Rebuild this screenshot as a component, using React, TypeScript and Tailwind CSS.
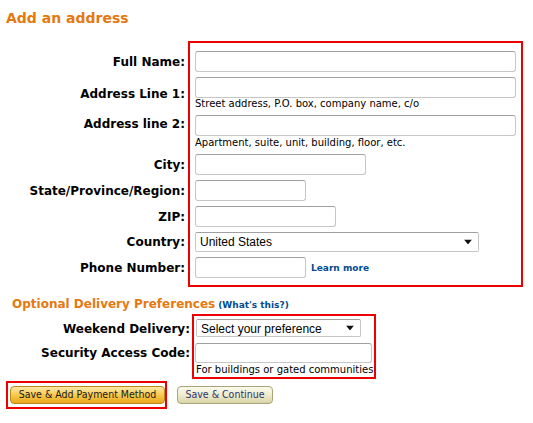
import React from 'react';

const inputCls =
  'block rounded-[3px] border border-[#c6c6c6] border-t-[#a0a0a0] bg-white px-1 text-[12px] outline-none';
const hintCls = 'block text-[10px] text-black';
const labelCls = 'text-right text-[12px] font-bold leading-[16px] text-black';

const Arrow = () => (
  <svg
    className="pointer-events-none absolute right-[7px] top-1/2 -translate-y-1/2"
    width="8"
    height="5"
    viewBox="0 0 8 5"
  >
    <path d="M0 0 H8 L4 5 Z" fill="#111" />
  </svg>
);

const Select = ({ value, width, height }: { value: string; width: string; height: string }) => (
  <div className={`relative ${width}`}>
    <select
      defaultValue={value}
      className={`${height} block w-full appearance-none rounded-[2px] border border-[#c6c6c6] border-t-[#a0a0a0] bg-white pl-[4px] text-[12px] text-black outline-none`}
      style={{ fontFamily: '"Liberation Sans", Arial, sans-serif' }}
    >
      <option>{value}</option>
    </select>
    <Arrow />
  </div>
);

type Row = { label: string; align?: string; field: React.ReactNode };

const App = () => {
  const rows: Row[] = [
    { label: 'Full Name:', field: <input className={`${inputCls} h-[21px] w-[321px]`} /> },
    {
      label: 'Address Line 1:',
      field: (
        <>
          <input className={`${inputCls} h-[21px] w-[321px]`} />
          <span className={`${hintCls} leading-[12px]`}>Street address, P.O. box, company name, c/o</span>
        </>
      ),
    },
    {
      label: 'Address line 2:',
      align: 'self-start pt-[1px]',
      field: (
        <>
          <input className={`${inputCls} h-[21px] w-[321px]`} />
          <span className={`${hintCls} leading-[13px]`}>Apartment, suite, unit, building, floor, etc.</span>
        </>
      ),
    },
    { label: 'City:', field: <input className={`${inputCls} h-[21px] w-[171px]`} /> },
    { label: 'State/Province/Region:', field: <input className={`${inputCls} h-[21px] w-[111px]`} /> },
    { label: 'ZIP:', field: <input className={`${inputCls} h-[21px] w-[141px]`} /> },
    {
      label: 'Country:',
      field: <Select value="United States" width="w-[284px]" height="h-[20px]" />,
    },
    {
      label: 'Phone Number:',
      field: (
        <div className="flex items-center">
          <input className={`${inputCls} h-[21px] w-[111px]`} />
          <a className="ml-[5px] mt-[2px] text-[9px] font-bold text-[#004b91]">Learn more</a>
        </div>
      ),
    },
  ];

  return (
    <div
      className="min-h-[423px] w-[533px] bg-white pl-[6px] pt-[8px] text-black"
      style={{ fontFamily: '"DejaVu Sans", Verdana, sans-serif' }}
    >
      <h1 className="text-[14px] font-bold leading-[20px] text-[#e47911]">Add an address</h1>

      {/* Address block: red frame spans the whole field column */}
      <div className="mt-[13px] grid grid-cols-[182px_335px] gap-y-[5px]">
        <div className="col-start-2 row-start-1 row-end-11 border-2 border-[#ee0000]" />
        <div className="col-start-1 row-start-1 h-[5px]" />
        {rows.map((r, i) => (
          <React.Fragment key={r.label}>
            <span
              className={`col-start-1 pr-[3px] ${labelCls} ${r.align ?? 'self-center'}`}
              style={{ gridRowStart: i + 2 }}
            >
              {r.label}
            </span>
            <div className="col-start-2 pl-[7px]" style={{ gridRowStart: i + 2 }}>
              {r.field}
            </div>
          </React.Fragment>
        ))}
        <div className="col-start-1 row-start-10 h-[4px]" />
      </div>

      {/* Optional section */}
      <div className="mt-[9px] flex items-baseline pl-[6px] leading-[16px]">
        <h2 className="text-[12px] font-bold text-[#e47911]">Optional Delivery Preferences</h2>
        <a className="ml-[3px] text-[9px] font-bold text-[#004b91]">(What's this?)</a>
      </div>

      <div className="mt-[1px] flex">
        <div className="flex w-[186px] shrink-0 flex-col items-end pr-[2px] pt-[7px]">
          <span className={labelCls}>Weekend Delivery:</span>
          <span className={`mt-[8px] ${labelCls}`}>Security Access Code:</span>
        </div>
        <div className="w-[184px] border-2 border-[#ee0000] pb-[1px] pl-[1px] pr-[2px] pt-[3px]">
          <div className="pl-[1px]">
            <Select value="Select your preference" width="w-[165px]" height="h-[18px]" />
          </div>
          <input className={`${inputCls} mt-[6px] h-[20px] w-[177px]`} />
          <span className={`${hintCls} whitespace-nowrap pl-[1px] leading-[13px]`}>
            For buildings or gated communities
          </span>
        </div>
      </div>

      {/* Buttons */}
      <div className="mt-[2px] flex items-center">
        <div className="border-2 border-[#ee0000] py-[3px] pl-[2px]">
          <button
            className="flex h-[18px] w-[155px] items-center justify-center rounded-[4px] border border-[#b88a1c] bg-gradient-to-b from-[#fde9a6] via-[#f7c84a] to-[#eaa91b] text-[10.5px] text-[#1a1a1a]"
            style={{ fontFamily: '"DejaVu Sans Condensed", Tahoma, sans-serif' }}
          >
            Save &amp; Add Payment Method
          </button>
        </div>
        <button
          className="ml-[10px] flex h-[18px] w-[96px] items-center justify-center rounded-[4px] border border-[#a9a47a] bg-gradient-to-b from-[#fbfaee] via-[#eeebcd] to-[#d9d4a6] text-[10.5px] text-[#2e3270]"
          style={{ fontFamily: '"DejaVu Sans Condensed", Tahoma, sans-serif' }}
        >
          Save &amp; Continue
        </button>
      </div>
    </div>
  );
};

export default App;
